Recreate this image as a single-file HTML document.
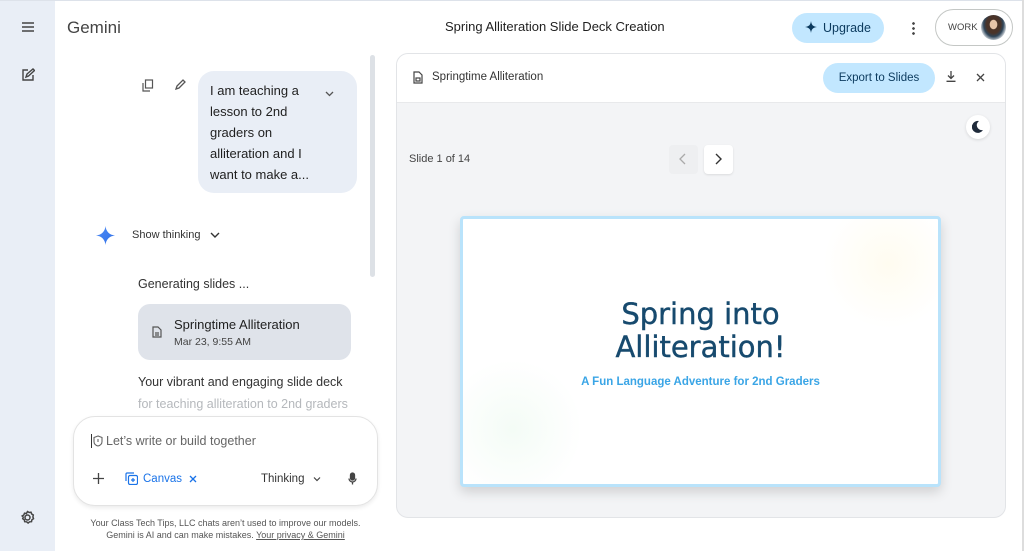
<!DOCTYPE html>
<html><head><meta charset="utf-8"><style>
*{box-sizing:border-box;margin:0;padding:0}
body{width:1024px;height:551px;overflow:hidden;background:#fff;font-family:"Liberation Sans",sans-serif;color:#1f1f1f;position:relative}
.abs{position:absolute}
.rail{left:0;top:0;width:55px;height:551px;background:#e9eef6;border-top:1px solid #dde2ea}
.topline{left:0;top:0;width:1024px;height:1px;background:#dde2ea}
.rborder{right:0;top:0;width:2px;height:551px;background:#ddd}
svg{display:block}
</style></head><body>
<div class="abs topline"></div>
<div class="abs rail"></div>
<div class="abs rborder"></div>
<svg class="abs" style="left:21px;top:21px" width="14" height="12"><path d="M1 2h12M1 6h12M1 10h12" stroke="#444" stroke-width="1.5"/></svg>
<svg class="abs" style="left:21px;top:68px" width="14" height="14" fill="none" stroke="#444" stroke-width="1.4"><path d="M7 2H2v10h10V7"/><path d="M5 9l1-3 6-5 1.5 1.5-6 5.5z"/></svg>
<svg class="abs" style="left:20px;top:510px" width="15" height="15" fill="none" stroke="#444" stroke-width="1.5"><circle cx="7.5" cy="7.5" r="2.5"/><path d="M7.5 1.5l1.6 1 1.9-.3.7 1.8 1.6 1-.4 1.9.6 1.8-1.6 1.1-.4 1.9-1.9.1-1.5 1.2-1.5-1.2-1.9-.1-.4-1.9-1.6-1.1.6-1.8L2.2 6l1.6-1 .7-1.8 1.9.3z"/></svg>

<div class="abs" style="left:67px;top:18px;font-size:17px;color:#444">Gemini</div>
<div class="abs" style="left:445px;top:19px;font-size:13px;color:#1f1f1f">Spring Alliteration Slide Deck Creation</div>
<div class="abs" style="left:792px;top:13px;width:92px;height:30px;border-radius:15px;background:#c2e7ff;font-size:12.5px;color:#0b3a5e;line-height:30px;padding-left:31px">Upgrade</div>
<svg class="abs" style="left:805px;top:21px" width="12" height="12"><path d="M6 0C6.5 4 8 5.5 12 6 8 6.5 6.5 8 6 12 5.5 8 4 6.5 0 6 4 5.5 5.5 4 6 0z" fill="#0b3a5e"/></svg>
<div class="abs" style="left:912px;top:21px;width:3px;height:14px;background:radial-gradient(circle,#444 1.2px,transparent 1.5px) 0 0/3px 5px"></div>
<div class="abs" style="left:935px;top:9px;width:78px;height:37px;border-radius:19px;border:1px solid #c4c7c5;background:#fff;font-size:9.5px;color:#444;line-height:35px;padding-left:12px">WORK
<div class="abs" style="right:6px;top:5px;width:25px;height:25px;border-radius:50%;background:radial-gradient(ellipse at 50% 38%,#e6c4a8 20%,#4a3328 23%,#4a3328 40%,#2e4458 55%,#d8dde2 75%)"></div></div>

<div class="abs" style="left:370px;top:55px;width:5px;height:222px;border-radius:3px;background:#dde1e6"></div>
<svg class="abs" style="left:142px;top:79px" width="12" height="13" fill="none" stroke="#555" stroke-width="1.2"><rect x="3.5" y="1" width="7" height="8"/><path d="M1 4v8h7"/></svg>
<svg class="abs" style="left:175px;top:79px" width="11" height="11" fill="none" stroke="#555" stroke-width="1.3"><path d="M1 10l1-3 6-6 2 2-6 6z"/></svg>
<div class="abs" style="left:198px;top:71px;width:159px;height:122px;border-radius:16px;background:#e9eef6;font-size:13px;line-height:21px;color:#1f1f1f;padding:9px 12px">I am teaching a<br>lesson to 2nd<br>graders on<br>alliteration and I<br>want to make a...</div>
<svg class="abs" style="left:325px;top:91px" width="9" height="6" fill="none" stroke="#555" stroke-width="1.3"><path d="M1 1l3.5 3.5L8 1"/></svg>

<svg class="abs" style="left:96px;top:226px" width="19" height="19"><defs><linearGradient id="g" x1="0" y1="0" x2="1" y2="1"><stop offset="0" stop-color="#4e8cf5"/><stop offset="1" stop-color="#2f6fe8"/></linearGradient></defs><path d="M9.5 0C10 5.5 13.5 9 19 9.5 13.5 10 10 13.5 9.5 19 9 13.5 5.5 10 0 9.5 5.5 9 9 5.5 9.5 0z" fill="url(#g)"/></svg>
<div class="abs" style="left:132px;top:229px;font-size:11px;color:#333">Show thinking</div>
<svg class="abs" style="left:210px;top:232px" width="10" height="7" fill="none" stroke="#333" stroke-width="1.4"><path d="M1 1l4 4 4-4"/></svg>
<div class="abs" style="left:138px;top:277px;font-size:12.5px;color:#333">Generating slides ...</div>
<div class="abs" style="left:138px;top:304px;width:213px;height:56px;border-radius:12px;background:#dfe3ea"></div>
<svg class="abs" style="left:152px;top:326px" width="10" height="12" fill="none" stroke="#555" stroke-width="1.2"><path d="M1 1h5l3 3v7H1z"/><path d="M3 7h4M3 9h4"/></svg>
<div class="abs" style="left:174px;top:317px;font-size:13px;color:#1f1f1f">Springtime Alliteration</div>
<div class="abs" style="left:174px;top:336px;font-size:10.5px;color:#444">Mar 23, 9:55 AM</div>
<div class="abs" style="left:138px;top:375px;font-size:12.5px;color:#333">Your vibrant and engaging slide deck</div>
<div class="abs" style="left:138px;top:397px;font-size:12.5px;color:#b5b8bc">for teaching alliteration to 2nd graders</div>

<div class="abs" style="left:73px;top:416px;width:305px;height:90px;border-radius:22px;border:1px solid #e3e3e3;background:#fff;box-shadow:0 2px 4px rgba(0,0,0,.08)"></div>
<div class="abs" style="left:91px;top:434px;width:1px;height:14px;background:#333"></div>
<svg class="abs" style="left:93px;top:435px" width="10" height="12" fill="none" stroke="#666" stroke-width="1.1"><path d="M5 1L1 2.5v4C1 9 3 10.5 5 11c2-.5 4-2 4-4.5v-4z"/><path d="M5 4v3"/></svg>
<div class="abs" style="left:106px;top:434px;font-size:12.5px;color:#666">Let’s write or build together</div>
<svg class="abs" style="left:93px;top:473px" width="11" height="11" stroke="#444" stroke-width="1.3"><path d="M5.5 0v11M0 5.5h11"/></svg>
<svg class="abs" style="left:125px;top:472px" width="13" height="13" fill="none" stroke="#1a73e8" stroke-width="1.2"><rect x="3.5" y="3.5" width="9" height="9" rx="1.5"/><path d="M1 9V2a1 1 0 011-1h7"/><path d="M8 6v4M6 8h4"/></svg>
<div class="abs" style="left:143px;top:473px;font-size:11.5px;color:#1a73e8">Canvas</div>
<svg class="abs" style="left:189px;top:475px" width="8" height="8" stroke="#1a73e8" stroke-width="1.3"><path d="M1 1l6 6M7 1L1 7"/></svg>
<div class="abs" style="left:261px;top:473px;font-size:11.5px;color:#333">Thinking</div>
<svg class="abs" style="left:313px;top:477px" width="8" height="5" fill="none" stroke="#444" stroke-width="1.2"><path d="M1 .5l3 3 3-3"/></svg>
<svg class="abs" style="left:348px;top:472px" width="9" height="13" fill="none" stroke="#444" stroke-width="1.3"><rect x="2.5" y="1" width="4" height="7" rx="2" fill="#444"/><path d="M1 6.5a3.5 3.5 0 007 0M4.5 10v2.5"/></svg>
<div class="abs" style="left:73px;top:517px;width:305px;text-align:center;font-size:9px;line-height:12px;color:#555">Your Class Tech Tips, LLC chats aren’t used to improve our models.<br>Gemini is AI and can make mistakes. <u>Your privacy &amp; Gemini</u></div>

<div class="abs" style="left:396px;top:53px;width:610px;height:465px;border-radius:12px;border:1px solid #e2e4e7;background:#f3f4f6;overflow:hidden">
 <div style="height:49px;background:#fff;border-bottom:1px solid #e8e9eb"></div>
</div>
<svg class="abs" style="left:413px;top:71px" width="10" height="13" fill="none" stroke="#444" stroke-width="1.2"><path d="M1 1h5l3 3v8H1z"/><rect x="3" y="7" width="4" height="3"/></svg>
<div class="abs" style="left:432px;top:71px;font-size:11.5px;color:#333">Springtime Alliteration</div>
<div class="abs" style="left:823px;top:63px;width:112px;height:30px;border-radius:15px;background:#c2e7ff;font-size:11.5px;color:#0b3a5e;line-height:30px;text-align:center">Export to Slides</div>
<svg class="abs" style="left:946px;top:71px" width="10" height="11" fill="none" stroke="#444" stroke-width="1.3"><path d="M5 0v7M2 4.5L5 7.5 8 4.5M0.5 10.3h9"/></svg>
<svg class="abs" style="left:976px;top:73px" width="9" height="9" stroke="#444" stroke-width="1.3"><path d="M1 1l7 7M8 1L1 8"/></svg>
<div class="abs" style="left:966px;top:115px;width:24px;height:24px;border-radius:50%;background:#fff;box-shadow:0 1px 3px rgba(0,0,0,.12)"></div>
<svg class="abs" style="left:972px;top:120px" width="12" height="13"><path d="M7 1A6 6 0 1011 10 5 5 0 017 1z" fill="#1f2a3a"/></svg>
<div class="abs" style="left:409px;top:153px;font-size:11px;color:#444">Slide 1 of 14</div>
<div class="abs" style="left:669px;top:145px;width:29px;height:29px;border-radius:4px;background:#eeeff1"></div>
<svg class="abs" style="left:679px;top:153px" width="7" height="12" fill="none" stroke="#aaa" stroke-width="1.3"><path d="M6 1L1 6l5 5"/></svg>
<div class="abs" style="left:704px;top:145px;width:29px;height:29px;border-radius:4px;background:#fff;box-shadow:0 1px 2px rgba(0,0,0,.1)"></div>
<svg class="abs" style="left:715px;top:153px" width="7" height="12" fill="none" stroke="#333" stroke-width="1.4"><path d="M1 1l5 5-5 5"/></svg>

<div class="abs" style="left:460px;top:216px;width:481px;height:271px;border-radius:4px;border:3px solid #b9e3fb;background:#fff;box-shadow:0 5px 12px rgba(0,0,0,.15);overflow:hidden">
 <div class="abs" style="left:360px;top:-20px;width:130px;height:130px;border-radius:50%;background:radial-gradient(circle,#fffcf0 0%,rgba(255,252,240,0) 70%)"></div>
 <div class="abs" style="left:-20px;top:140px;width:140px;height:140px;border-radius:50%;background:radial-gradient(circle,#f4fcf6 0%,rgba(244,252,246,0) 70%)"></div>
 <div style="position:absolute;left:0;width:100%;top:79px;text-align:center;font-family:'DejaVu Sans',sans-serif;font-size:29px;line-height:33px;color:#174a6e;-webkit-text-stroke:0.4px #174a6e">Spring into<br>Alliteration!</div>
 <div style="position:absolute;left:0;width:100%;top:157px;text-align:center;font-size:11.5px;font-weight:bold;color:#3aa5e6">A Fun Language Adventure for 2nd Graders</div>
</div>
</body></html>
